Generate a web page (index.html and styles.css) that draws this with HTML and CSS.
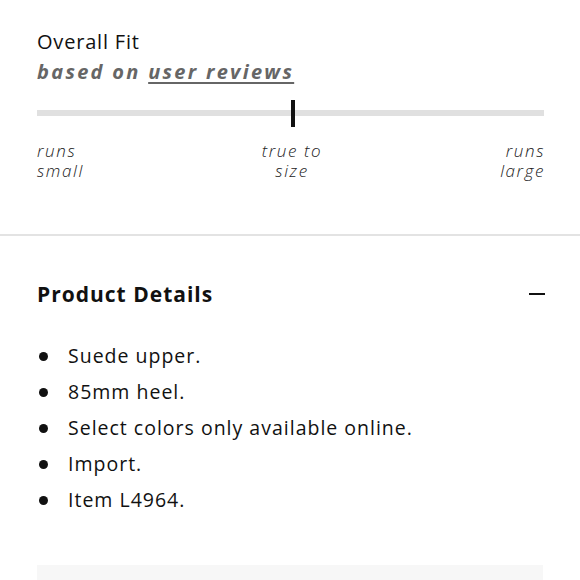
FILE: index.html
```html
<!DOCTYPE html>
<html>
<head>
<meta charset="utf-8">
<link rel="stylesheet" href="styles.css">
</head>
<body>
<section class="fit">
  <h2 class="fit-title">Overall Fit</h2>
  <p class="fit-sub">based on <span class="link">user reviews</span></p>
  <div class="track">
    <div class="marker"></div>
  </div>
  <div class="labels">
    <span class="lbl left">runs<br>small</span>
    <span class="lbl mid">true to<br>size</span>
    <span class="lbl right">runs<br>large</span>
  </div>
</section>
<hr class="divider">
<section class="details">
  <div class="details-head">
    <h2 class="details-title">Product Details</h2>
    <span class="minus"></span>
  </div>
  <ul class="list">
    <li>Suede upper.</li>
    <li>85mm heel.</li>
    <li>Select colors only available online.</li>
    <li>Import.</li>
    <li>Item L4964.</li>
  </ul>
  <div class="box"></div>
</section>
</body>
</html>
```
FILE: styles.css
```css
html, body { margin: 0; padding: 0; background: #fff; }
body {
  font-family: "Open Sans", Lato, sans-serif;
  color: #111;
  width: 580px;
  height: 580px;
  overflow: hidden;
}
.fit { padding: 28px 36px 0 37px; }
.fit-title {
  margin: 0;
  font-size: 20px;
  font-weight: 400;
  line-height: 28px;
  letter-spacing: 0.8px;
}
.fit-sub {
  margin: 2px 0 0;
  font-size: 20px;
  font-style: italic;
  font-weight: 700;
  color: #666;
  letter-spacing: 2.3px;
  line-height: 28px;
}
.link { text-decoration: underline; text-underline-offset: 3px; text-decoration-thickness: 2px; }
.track {
  margin-top: 24px;
  height: 6px;
  background: #e0e0e0;
  position: relative;
}
.marker {
  position: absolute;
  left: 254px;
  top: -10px;
  width: 4px;
  height: 27px;
  background: #111;
}
.labels {
  display: flex;
  justify-content: space-between;
  margin-top: 25px;
  height: 60px;
}
.lbl {
  font-size: 17px;
  font-style: italic;
  font-weight: 300;
  line-height: 20px;
  color: #222;
  letter-spacing: 1.6px;
}
.mid { text-align: center; }
.right { text-align: right; margin-right: -1px; }
.divider {
  border: 0;
  height: 2px;
  background: #e3e3e3;
  margin: 33px 0 0;
}
.details { padding: 44px 35px 0 37px; }
.details-head {
  display: flex;
  justify-content: space-between;
  align-items: center;
}
.details-title {
  margin: 0;
  font-size: 21px;
  font-weight: 700;
  line-height: 28px;
  letter-spacing: 1px;
}
.minus {
  width: 16px;
  height: 2px;
  background: #111;
}
.list {
  list-style: none;
  margin: 30px 0 0;
  padding: 0;
}
.list li {
  position: relative;
  padding-left: 31px;
  font-size: 19.5px;
  line-height: 36px;
  letter-spacing: 1px;
}
.list li::before {
  content: "";
  position: absolute;
  left: 2px;
  top: 14px;
  width: 9px;
  height: 9px;
  border-radius: 50%;
  background: #111;
}
.box {
  margin-top: 47px;
  height: 40px;
  background: #f7f7f7;
  margin-right: 2px;
}
```
